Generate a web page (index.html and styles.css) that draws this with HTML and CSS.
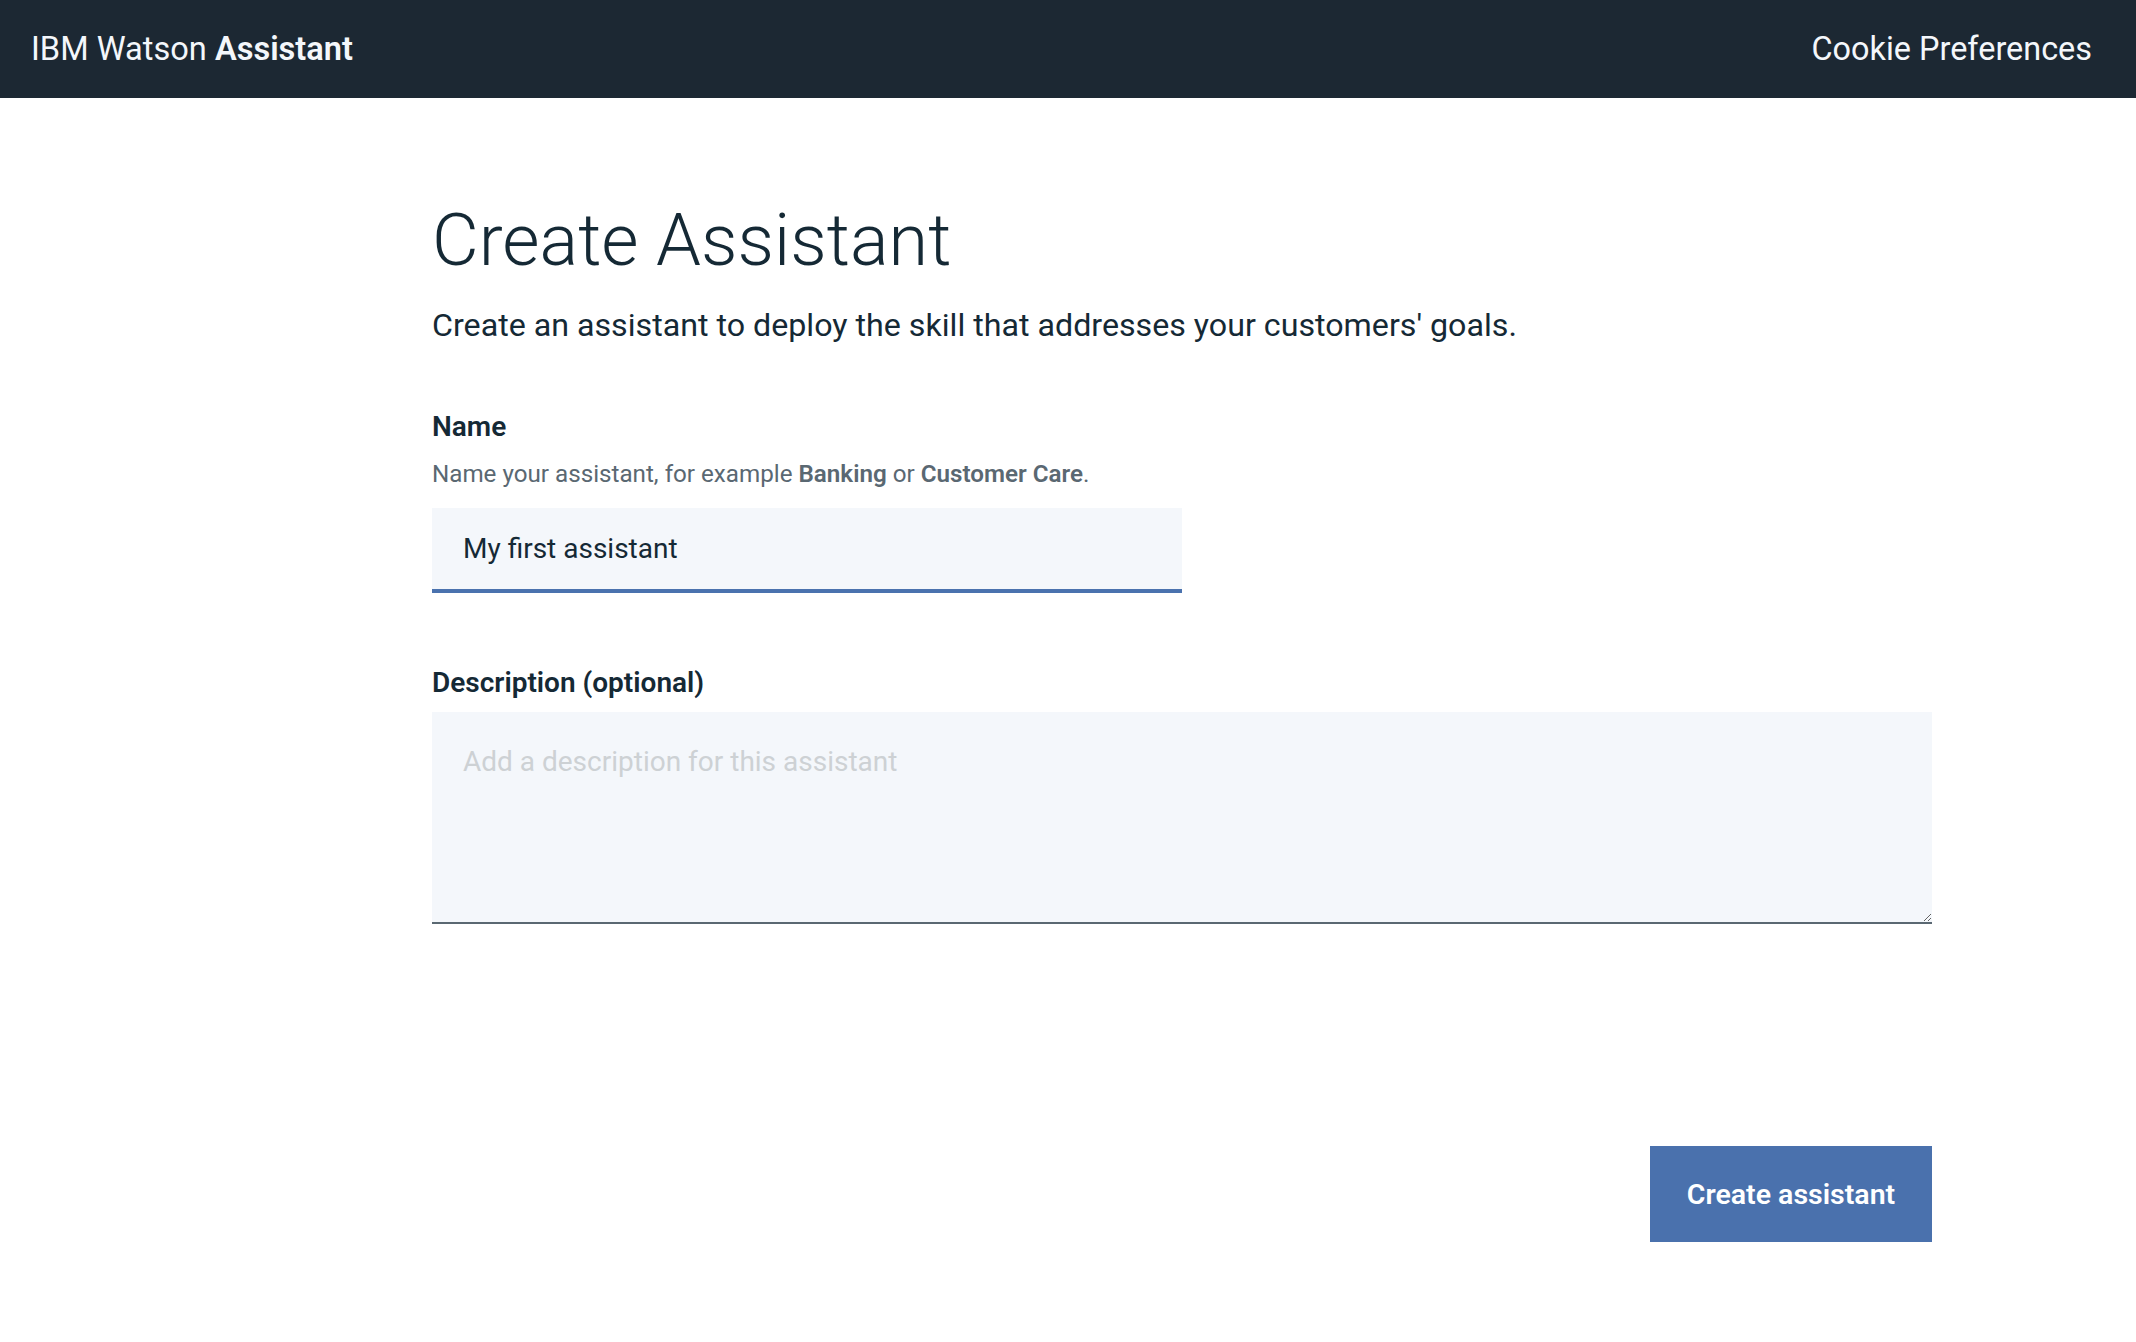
FILE: index.html
```html
<!DOCTYPE html>
<html lang="en">
<head>
<meta charset="utf-8">
<title>IBM Watson Assistant</title>
<link rel="stylesheet" href="styles.css">
</head>
<body>
<header class="topbar">
  <div class="brand">IBM Watson <strong>Assistant</strong></div>
  <a class="cookie" href="#">Cookie Preferences</a>
</header>
<main class="page">
  <h1 class="title">Create Assistant</h1>
  <p class="subtitle">Create an assistant to deploy the skill that addresses your customers' goals.</p>
  <div class="field name-field">
    <label class="label" for="name">Name</label>
    <p class="helper">Name your assistant, for example <strong>Banking</strong> or <strong>Customer Care</strong>.</p>
    <input id="name" class="text-input" type="text" value="My first assistant">
  </div>
  <div class="field desc-field">
    <label class="label desc-label" for="desc">Description (optional)</label>
    <textarea id="desc" class="text-area" placeholder="Add a description for this assistant"></textarea>
  </div>
  <div class="actions">
    <button class="primary" type="button">Create assistant</button>
  </div>
</main>
</body>
</html>
```

FILE: styles.css
```css
html, body {
  margin: 0;
  padding: 0;
  background: #ffffff;
}

body {
  font-family: Roboto, "Noto Sans", "Liberation Sans", sans-serif;
  color: #152935;
}

.topbar {
  height: 98px;
  background: #1c2833;
  display: flex;
  align-items: center;
  justify-content: space-between;
  padding: 0 44px 0 31px;
  box-sizing: border-box;
}

.brand {
  color: #f4f7fb;
  font-size: 32.6px;
  font-weight: 400;
}

.brand strong {
  font-weight: 600;
}

.cookie {
  color: #f4f7fb;
  font-size: 32.4px;
  text-decoration: none;
}

.page {
  width: 1500px;
  margin-left: 432px;
  padding-top: 99px;
}

.title {
  margin: 0;
  font-size: 72px;
  line-height: 88px;
  font-weight: 300;
  color: #152935;
}

.subtitle {
  margin: 20px 0 0;
  font-size: 32.2px;
  line-height: 40px;
  color: #152935;
}

.field {
  display: flex;
  flex-direction: column;
  align-items: flex-start;
}

.name-field {
  margin-top: 66px;
}

.label {
  font-size: 28px;
  line-height: 32px;
  font-weight: 600;
  color: #152935;
}

.helper {
  margin: 17px 0 0;
  font-size: 24.2px;
  line-height: 28px;
  color: #5a6872;
}

.helper strong {
  font-weight: 600;
}

.text-input {
  margin-top: 20px;
  width: 750px;
  height: 85px;
  box-sizing: border-box;
  border: none;
  border-bottom: 4px solid #4a72ae;
  background: #f4f7fb;
  padding: 0 31px;
  font-family: inherit;
  font-size: 28px;
  color: #152935;
  outline: none;
}

.desc-field {
  margin-top: 74px;
}

.desc-label {
  margin-bottom: 13px;
}

.text-area {
  width: 1500px;
  height: 212px;
  box-sizing: border-box;
  border: none;
  border-bottom: 2px solid #5a6872;
  background: #f4f7fb;
  padding: 30px 31px 0;
  font-family: inherit;
  font-size: 28px;
  line-height: 40px;
  color: #152935;
  outline: none;
  margin: 0;
}

.text-area::placeholder {
  color: #cdd1d4;
}

.actions {
  display: flex;
  justify-content: flex-end;
  margin-top: 222px;
}

.primary {
  width: 282px;
  height: 96px;
  border: none;
  background: #4a71ad;
  color: #ffffff;
  font-family: inherit;
  font-size: 28.5px;
  font-weight: 600;
  padding: 0;
  cursor: pointer;
}
```
